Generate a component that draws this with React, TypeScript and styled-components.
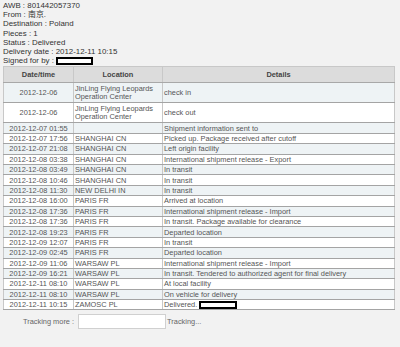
import React from "react";
import styled, { createGlobalStyle } from "styled-components";

const GlobalStyle = createGlobalStyle`
  html, body {
    margin: 0;
    padding: 0;
    background: #f2f2f2;
  }
  body {
    font-family: "Liberation Sans", Arial, sans-serif;
    color: #333;
    -webkit-font-smoothing: antialiased;
  }
`;

interface TrackEvent {
  date: string;
  location: string;
  details: string;
  redacted?: boolean;
}

const EVENTS: TrackEvent[] = [
  { date: "2012-12-07 01:55", location: "", details: "Shipment information sent to" },
  { date: "2012-12-07 17:56", location: "SHANGHAI CN", details: "Picked up. Package received after cutoff" },
  { date: "2012-12-07 21:08", location: "SHANGHAI CN", details: "Left origin facility" },
  { date: "2012-12-08 03:38", location: "SHANGHAI CN", details: "International shipment release - Export" },
  { date: "2012-12-08 03:49", location: "SHANGHAI CN", details: "In transit" },
  { date: "2012-12-08 10:46", location: "SHANGHAI CN", details: "In transit" },
  { date: "2012-12-08 11:30", location: "NEW DELHI IN", details: "In transit" },
  { date: "2012-12-08 16:00", location: "PARIS FR", details: "Arrived at location" },
  { date: "2012-12-08 17:36", location: "PARIS FR", details: "International shipment release - Import" },
  { date: "2012-12-08 17:36", location: "PARIS FR", details: "In transit. Package available for clearance" },
  { date: "2012-12-08 19:23", location: "PARIS FR", details: "Departed location" },
  { date: "2012-12-09 12:07", location: "PARIS FR", details: "In transit" },
  { date: "2012-12-09 02:45", location: "PARIS FR", details: "Departed location" },
  { date: "2012-12-09 11:06", location: "WARSAW PL", details: "International shipment release - Import" },
  { date: "2012-12-09 16:21", location: "WARSAW PL", details: "In transit. Tendered to authorized agent for final delivery" },
  { date: "2012-12-11 08:10", location: "WARSAW PL", details: "At local facility" },
  { date: "2012-12-11 08:10", location: "WARSAW PL", details: "On vehicle for delivery" },
  { date: "2012-12-11 10:15", location: "ZAMOSC PL", details: "Delivered.", redacted: true },
];

const App: React.FC = () => {
  return (
    <>
      <GlobalStyle />
      <Page>
        <InfoBlock>
          <InfoLine>AWB : 801442057370</InfoLine>
          <InfoLine>From : 南京.</InfoLine>
          <InfoLine>Destination : Poland</InfoLine>
          <InfoLine>Pieces : 1</InfoLine>
          <InfoLine>Status : Delivered</InfoLine>
          <InfoLine>Delivery date : 2012-12-11 10:15</InfoLine>
          <InfoLine>
            Signed for by : <Redacted $width={37} />
          </InfoLine>
        </InfoBlock>

        <Table>
          <colgroup>
            <col style={{ width: 70 }} />
            <col style={{ width: 89 }} />
            <col />
          </colgroup>
          <thead>
            <tr>
              <HeadCell>Date/time</HeadCell>
              <HeadCell>Location</HeadCell>
              <HeadCell>Details</HeadCell>
            </tr>
          </thead>
          <tbody>
            <Row $alt>
              <Cell $center $tall>2012-12-06</Cell>
              <Cell $tall>
                JinLing Flying Leopards
                <br />
                Operation Center
              </Cell>
              <Cell $tall>check in</Cell>
            </Row>
            <Row>
              <Cell $center $tall>2012-12-06</Cell>
              <Cell $tall>
                JinLing Flying Leopards
                <br />
                Operation Center
              </Cell>
              <Cell $tall>check out</Cell>
            </Row>
            {EVENTS.map((ev, i) => (
              <Row key={i} $alt={i % 2 === 0}>
                <Cell $center>{ev.date}</Cell>
                <Cell>{ev.location}</Cell>
                <Cell>
                  {ev.details}
                  {ev.redacted && (
                    <>
                      {" "}
                      <Redacted $width={38} />
                    </>
                  )}
                </Cell>
              </Row>
            ))}
          </tbody>
        </Table>

        <TrackingBar>
          <TrackingLabel>Tracking more :</TrackingLabel>
          <TrackingInput type="text" />
          <TrackingLink>Tracking...</TrackingLink>
        </TrackingBar>
      </Page>
    </>
  );
};

export default App;

const Page = styled.div`
  width: 400px;
  height: 347px;
  padding: 1px 5px 0 3px;
  box-sizing: border-box;
  overflow: hidden;
`;

const InfoBlock = styled.div`
  font-family: "Liberation Sans", "Noto Sans CJK SC", Arial, sans-serif;
  font-size: 7.9px;
  line-height: 9.2px;
  color: #333;
`;

const InfoLine = styled.div`
  white-space: nowrap;
`;

const Redacted = styled.span<{ $width: number }>`
  display: inline-block;
  vertical-align: middle;
  width: ${(p) => p.$width}px;
  height: 8px;
  box-sizing: border-box;
  border: 2px solid #000;
  background: #fff;
`;

const Table = styled.table`
  width: 392px;
  margin-top: 1px;
  border-collapse: collapse;
  table-layout: fixed;
  font-size: 7.4px;
  color: #555;
  border: 1px solid #c4c4c4;
`;

const HeadCell = styled.th`
  height: 15px;
  padding: 0;
  background: #dcdcdc;
  color: #444;
  font-weight: bold;
  text-align: center;
  border: 1px solid #c8c8c8;
  border-bottom: 1px solid #a8a8a8;
`;

const Row = styled.tr<{ $alt?: boolean }>`
  background: ${(p) => (p.$alt ? "#eef3f5" : "#ffffff")};
`;

const Cell = styled.td<{ $center?: boolean; $tall?: boolean }>`
  height: ${(p) => (p.$tall ? "19px" : "9.4px")};
  padding: 0 1px;
  line-height: ${(p) => (p.$tall ? "8px" : "9px")};
  text-align: ${(p) => (p.$center ? "center" : "left")};
  white-space: nowrap;
  overflow: hidden;
  border-left: 1px solid #c8c8c8;
  border-right: 1px solid #c8c8c8;
  border-bottom: 1px solid #a4a4a4;
`;

const TrackingBar = styled.div`
  display: flex;
  align-items: center;
  margin-top: 4px;
  padding-left: 20px;
  font-size: 7.4px;
  color: #666;
`;

const TrackingLabel = styled.span`
  margin-right: 4px;
`;

const TrackingInput = styled.input`
  width: 88px;
  height: 15px;
  box-sizing: border-box;
  padding: 0;
  border: 1px solid #d0d0d0;
  background: #fff;
  outline: none;
`;

const TrackingLink = styled.span`
  margin-left: 1px;
`;
